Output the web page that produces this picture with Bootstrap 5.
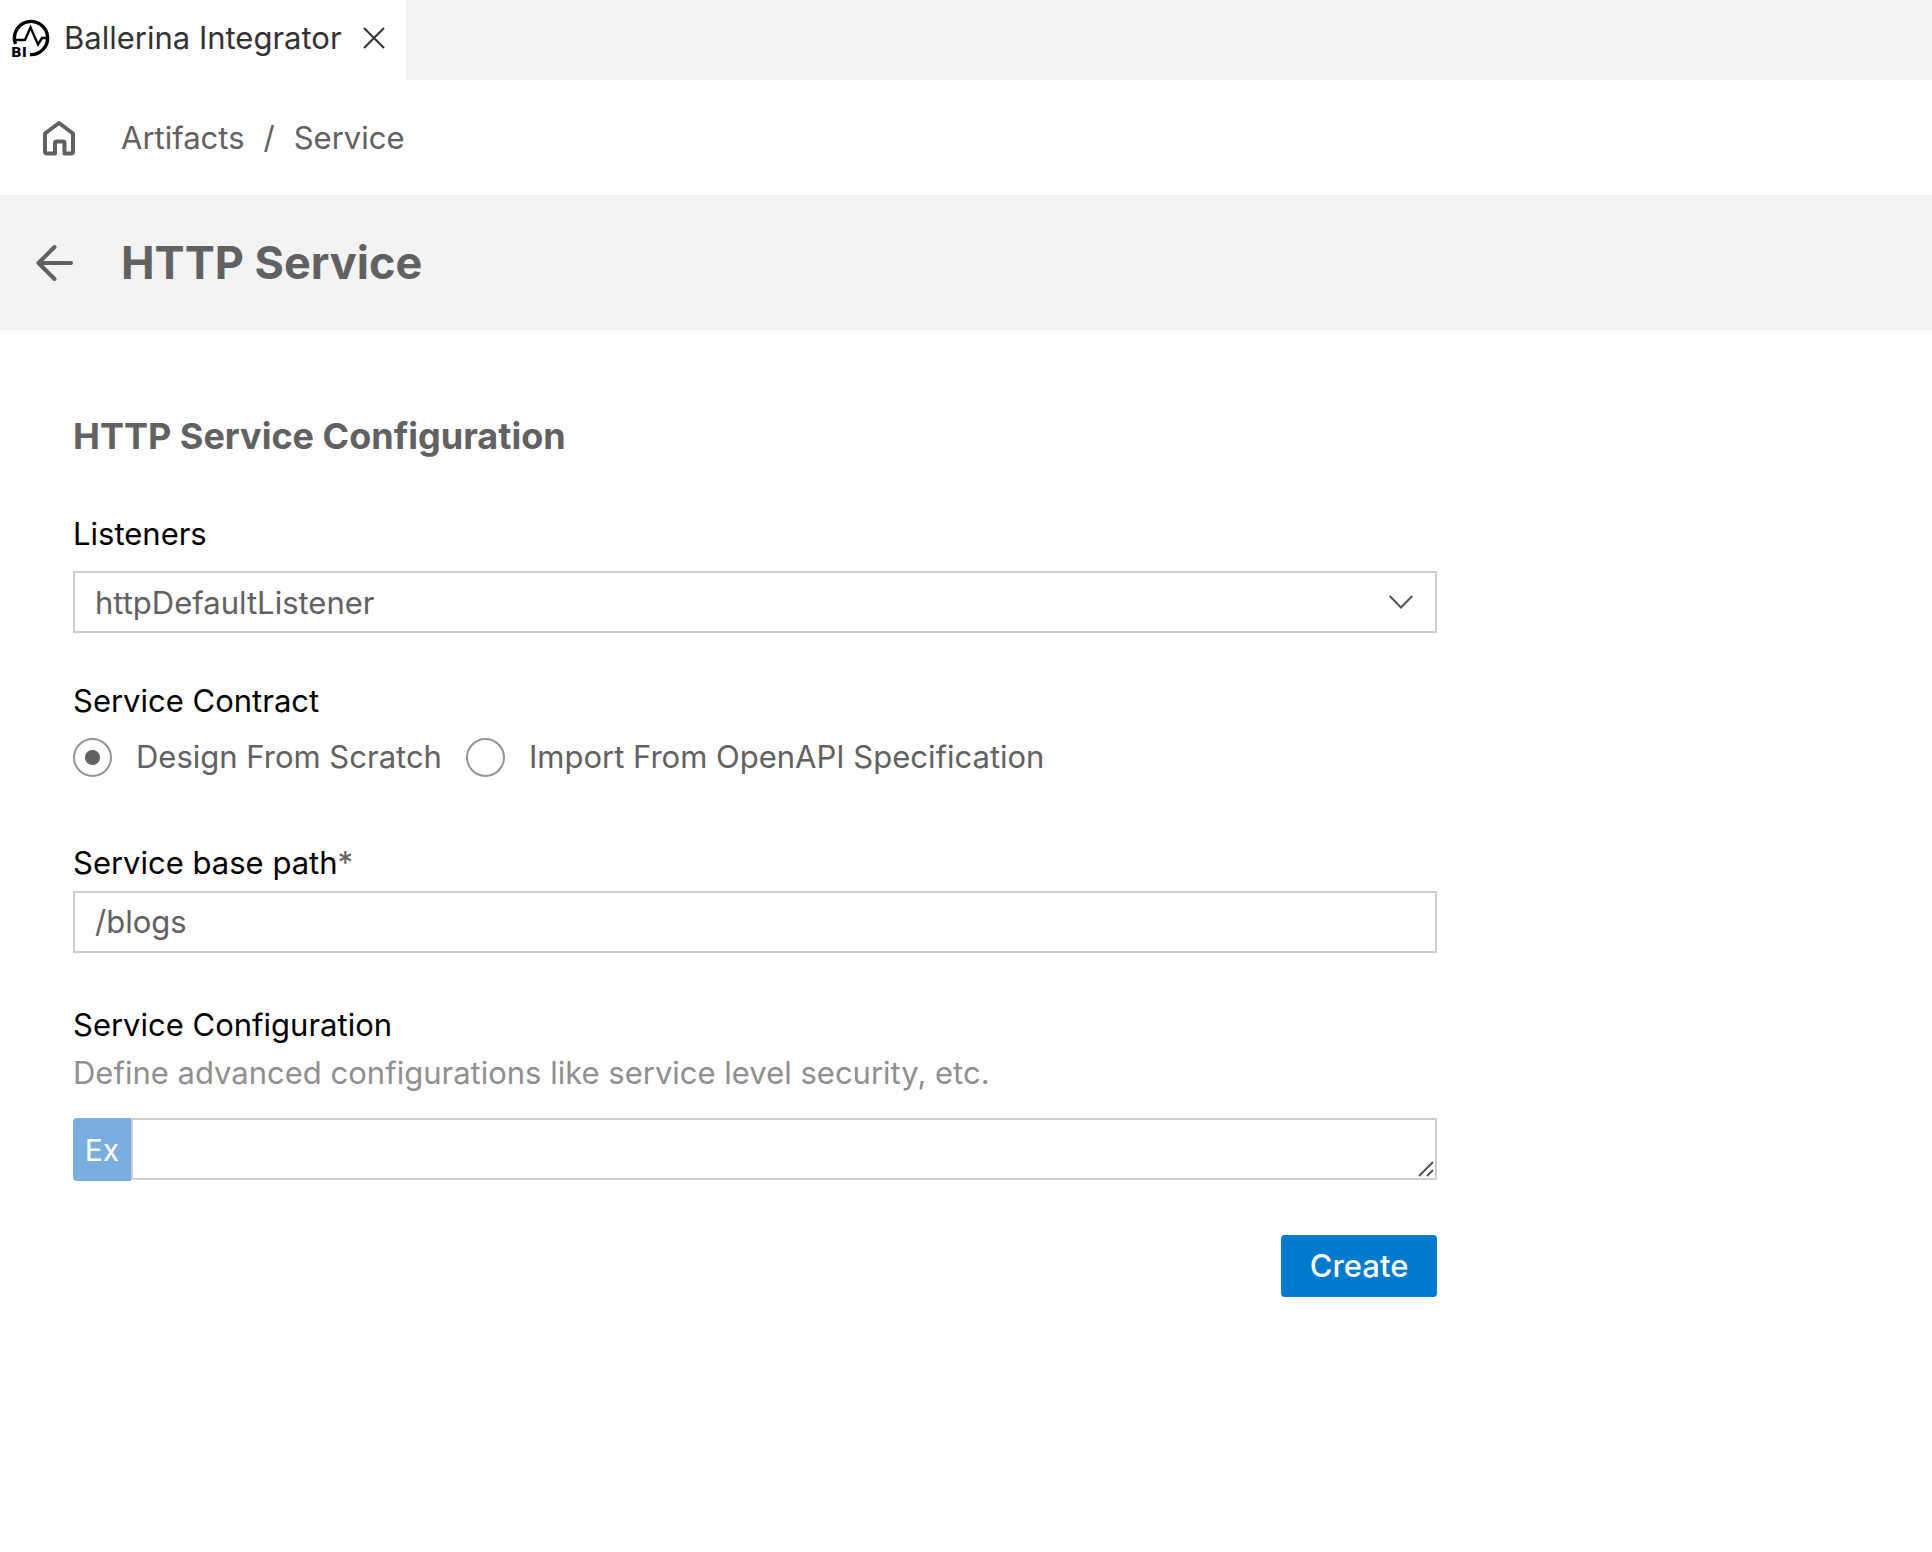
<!DOCTYPE html>
<html lang="en">
<head>
<meta charset="utf-8">
<meta name="viewport" content="width=device-width, initial-scale=1">
<title>Ballerina Integrator</title>
<link href="https://cdn.jsdelivr.net/npm/bootstrap@5.3.0/dist/css/bootstrap.min.css" rel="stylesheet">
<style>
  :root { --ui-text: #616161; --ui-line: #cecece; --ui-bar: #f3f3f3; --ui-blue: #007acc; }
  body { font-family: Inter, "Liberation Sans", sans-serif; font-size: 31px; line-height: 40px; color: var(--ui-text); background: #fff; }
  svg { display: block; flex: none; }
  .tab-strip { background: var(--ui-bar); }
  .editor-tab { height: 80px; padding: 0 21px 4px 12px; gap: 13px; background: #fff; color: #333; }
  .icon-btn { border: 0; padding: 0; background: none; color: inherit; }
  .crumb-bar { height: 115px; padding: 0 40px; gap: 43px; }
  .crumb-bar a { color: inherit; text-decoration: none; }
  .crumb-list { gap: 19px; }
  .title-bar { height: 135px; padding: 0 35px; gap: 46px; background: var(--ui-bar); }
  .title-bar h1 { font-size: 45px; line-height: 60px; font-weight: 700; margin: 0; }
  .form-pane { max-width: 1510px; padding: 82px 73px; }
  .form-pane h2 { font-size: 36px; line-height: 48px; font-weight: 700; margin: 0 0 54px; }
  .field-label { display: block; float: none; width: auto; margin: 0; color: #000; font-size: 31px; line-height: 40px; }
  .field-group { margin-bottom: 48px; }
  .choice-group { margin-bottom: 66px; }
  .path-group { margin-bottom: 52px; }
  .field-box { height: 62px; padding: 0 20px; border: 2px solid var(--ui-line); border-radius: 0; font-size: inherit; line-height: 40px; color: var(--ui-text); }
  .form-select.field-box {
    --bs-form-select-bg-img: url("data:image/svg+xml,%3csvg xmlns='http://www.w3.org/2000/svg' viewBox='0 0 24 14'%3e%3cpath fill='none' stroke='%23555' stroke-width='2' d='M.7 1 12 12.500 23.300 1'/%3e%3c/svg%3e");
    margin-top: 17px; padding-top: 2px; background-size: 24px 14px; background-position: right 22px center;
  }
  .path-group .field-box { margin-top: 8px; padding-bottom: 2px; }
  .radio-row { gap: 24px; margin-top: 16px; }
  .radio-item { gap: 24px; }
  .radio-item .form-check-input { width: 39px; height: 39px; margin: 0; border: 2px solid #949494; background-color: #fff; }
  .radio-item .form-check-input:checked { background-image: radial-gradient(circle, var(--ui-text) 7px, transparent 8px); }
  .required-mark { color: var(--ui-text); }
  .hint { margin: 8px 0 25px; color: #8f8f8f; }
  .ex-btn { flex: none; width: 58px; height: 63px; padding: 0; border: 0; border-radius: 4px 0 0 4px; background: #7aaee0; color: #fff; font-size: 30px; }
  textarea.field-box { min-height: 0; padding: 9px 20px; resize: none; overflow: hidden; }
  .grip { right: 3px; bottom: 4px; pointer-events: none; }
  .form-actions { margin-top: 54px; }
  .create-btn { min-width: 156px; height: 62px; padding: 0 28px; border: 0; border-radius: 4px; background: var(--ui-blue); color: #fff; font-weight: 500; line-height: 40px; }
</style>
</head>
<body>
<header>
  <div class="tab-strip d-flex">
    <div class="editor-tab d-flex align-items-center">
      <svg width="39" height="40" viewBox="0 0 39 40" aria-hidden="true">
        <path d="M3.500 26A16.600 16.600 0 1 1 18 36.600" fill="none" stroke="#000" stroke-width="3.400"/>
        <path d="M4 22H13L18.500 9.500 26 26.500 30 20H35" fill="none" stroke="#000" stroke-width="2.400"/>
        <text x="-1" y="38.500" font-family="DejaVu Sans" font-weight="700" font-size="14" stroke="#fff" stroke-width="3" paint-order="stroke">BI</text>
      </svg>
      <span>Ballerina Integrator</span>
      <button class="icon-btn ms-2" type="button" aria-label="Close tab">
        <svg width="22" height="22" viewBox="0 0 22 22" fill="none" stroke="currentColor" stroke-width="2"><path d="M1 1 21 21M21 1 1 21"/></svg>
      </button>
    </div>
  </div>
  <nav class="crumb-bar d-flex align-items-center" aria-label="Breadcrumb">
    <a href="#" aria-label="Home">
      <svg width="38" height="38" viewBox="0 0 38 38" fill="none" stroke="currentColor" stroke-width="4" stroke-linejoin="round"><path d="M5 14.500 19 4 33 14.500V32.500Q33 34.500 31 34.500H24.500V24Q24.500 22.500 23 22.500H16.500Q15 22.500 15 24V34.500H7Q5 34.500 5 32.500Z"/></svg>
    </a>
    <div class="crumb-list d-flex">
      <a href="#">Artifacts</a><span>/</span><a href="#">Service</a>
    </div>
  </nav>
  <div class="title-bar d-flex align-items-center">
    <button class="icon-btn" type="button" aria-label="Back">
      <svg width="40" height="40" viewBox="0 0 40 40" fill="none" stroke="currentColor" stroke-width="4" stroke-linecap="round" stroke-linejoin="round"><path d="M36 20H4M19.500 4 3.500 20 19.500 36"/></svg>
    </button>
    <h1>HTTP Service</h1>
  </div>
</header>
<main class="form-pane">
  <h2>HTTP Service Configuration</h2>
  <form>
    <div class="field-group">
      <label class="field-label" for="listeners">Listeners</label>
      <select class="form-select field-box" id="listeners"><option>httpDefaultListener</option></select>
    </div>

    <fieldset class="choice-group">
      <legend class="field-label">Service Contract</legend>
      <div class="radio-row d-flex flex-wrap">
        <div class="radio-item d-flex align-items-center">
          <input class="form-check-input" type="radio" name="contract" id="scratch" checked>
          <label for="scratch">Design From Scratch</label>
        </div>
        <div class="radio-item d-flex align-items-center">
          <input class="form-check-input" type="radio" name="contract" id="openapi">
          <label for="openapi">Import From OpenAPI Specification</label>
        </div>
      </div>
    </fieldset>

    <div class="path-group">
      <label class="field-label" for="basepath">Service base path<span class="required-mark">*</span></label>
      <input class="form-control field-box" id="basepath" type="text" value="/blogs">
    </div>

    <label class="field-label" for="config">Service Configuration</label>
    <p class="hint">Define advanced configurations like service level security, etc.</p>
    <div class="d-flex position-relative">
      <button class="ex-btn" type="button">Ex</button>
      <textarea class="form-control field-box" id="config" rows="1"></textarea>
      <svg class="grip position-absolute" width="16" height="16" viewBox="0 0 16 16" fill="none" stroke="#555" stroke-width="2" aria-hidden="true"><path d="M1 15 15 1M9 15 15 9"/></svg>
    </div>
    <div class="form-actions d-flex justify-content-end"><button class="create-btn" type="button">Create</button></div>
  </form>
</main>
<script src="https://cdn.jsdelivr.net/npm/bootstrap@5.3.0/dist/js/bootstrap.bundle.min.js"></script>
</body>
</html>
